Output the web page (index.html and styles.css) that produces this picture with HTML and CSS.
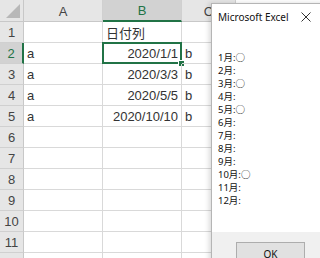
FILE: index.html
```html
<!DOCTYPE html>
<html lang="ja">
<head>
<meta charset="utf-8">
<link rel="stylesheet" href="styles.css">
</head>
<body>
<div class="sheet">
  <div class="corner"><span class="tri"></span></div>
  <div class="colhead">A</div>
  <div class="colhead sel">B</div>
  <div class="colhead">C</div>

  <div class="rowhead">1</div><div class="cell"></div><div class="cell">日付列</div><div class="cell"></div>
  <div class="rowhead sel">2</div><div class="cell">a</div><div class="cell num active">2020/1/1<span class="handle"></span></div><div class="cell">b</div>
  <div class="rowhead">3</div><div class="cell">a</div><div class="cell num">2020/3/3</div><div class="cell">b</div>
  <div class="rowhead">4</div><div class="cell">a</div><div class="cell num">2020/5/5</div><div class="cell">b</div>
  <div class="rowhead">5</div><div class="cell">a</div><div class="cell num">2020/10/10</div><div class="cell">b</div>
  <div class="rowhead">6</div><div class="cell"></div><div class="cell"></div><div class="cell"></div>
  <div class="rowhead">7</div><div class="cell"></div><div class="cell"></div><div class="cell"></div>
  <div class="rowhead">8</div><div class="cell"></div><div class="cell"></div><div class="cell"></div>
  <div class="rowhead">9</div><div class="cell"></div><div class="cell"></div><div class="cell"></div>
  <div class="rowhead">10</div><div class="cell"></div><div class="cell"></div><div class="cell"></div>
  <div class="rowhead">11</div><div class="cell"></div><div class="cell"></div><div class="cell"></div>
  <div class="rowhead">12</div><div class="cell"></div><div class="cell"></div><div class="cell"></div>
</div>

<div class="dialog">
  <div class="titlebar">
    <span class="title">Microsoft Excel</span>
    <svg class="close" width="10" height="10" viewBox="0 0 10 10"><path d="M0.5 0.5 L9.5 9.5 M9.5 0.5 L0.5 9.5" stroke="#333" stroke-width="1" fill="none"/></svg>
  </div>
  <div class="body">
    <div>1月:○</div>
    <div>2月:</div>
    <div>3月:○</div>
    <div>4月:</div>
    <div>5月:○</div>
    <div>6月:</div>
    <div>7月:</div>
    <div>8月:</div>
    <div>9月:</div>
    <div>10月:○</div>
    <div>11月:</div>
    <div>12月:</div>
  </div>
  <div class="footer">
    <div class="okbtn">OK</div>
  </div>
</div>
</body>
</html>
```

FILE: styles.css
```css
html, body {
  margin: 0;
  padding: 0;
  background: #ffffff;
  overflow: hidden;
  width: 320px;
  height: 258px;
}

.sheet {
  display: grid;
  grid-template-columns: 24px 79px 79px 54px;
  grid-template-rows: 22px repeat(12, 21px);
  font-family: "Liberation Sans", "Noto Sans CJK JP", sans-serif;
  font-size: 13px;
  color: #333;
}

.corner {
  background: #e6e6e6;
  border-right: 1px solid #c8c8c8;
  border-bottom: 1px solid #c8c8c8;
  box-sizing: border-box;
  position: relative;
}
.tri {
  position: absolute;
  right: 3px;
  bottom: 3px;
  width: 0;
  height: 0;
  border-left: 14px solid transparent;
  border-bottom: 14px solid #b8b8b8;
}

.colhead {
  background: #e6e6e6;
  border-right: 1px solid #d0d0d0;
  border-bottom: 1px solid #c8c8c8;
  box-sizing: border-box;
  display: flex;
  align-items: center;
  justify-content: center;
  font-size: 13px;
  color: #444;
  padding-top: 1px;
}
.colhead.sel {
  background: #d2d2d2;
  color: #217346;
  border-bottom: 2px solid #217346;
}

.rowhead {
  background: #e6e6e6;
  border-right: 1px solid #c8c8c8;
  border-bottom: 1px solid #d0d0d0;
  box-sizing: border-box;
  display: flex;
  align-items: center;
  justify-content: center;
  font-size: 13px;
  color: #444;
}
.rowhead.sel {
  background: #d2d2d2;
  color: #217346;
  border-right: 2px solid #217346;
}

.cell {
  border-right: 1px solid #d9d9d9;
  border-bottom: 1px solid #d9d9d9;
  box-sizing: border-box;
  display: flex;
  align-items: center;
  padding: 0 3px;
  white-space: nowrap;
  position: relative;
}
.cell.num {
  justify-content: flex-end;
}
.cell.active {
  border: 2px solid #217346;
  margin: -1px 0 0 -1px;
  padding-right: 2px;
}
.handle {
  position: absolute;
  right: -4px;
  bottom: -4px;
  width: 5px;
  height: 5px;
  background: #217346;
  border: 1px solid #fff;
  border-right: none;
  border-bottom: none;
}

.dialog {
  position: absolute;
  left: 211px;
  top: 3px;
  width: 120px;
  height: 262px;
  background: #fff;
  border: 1px solid #b5b5b5;
  box-shadow: -2px 0 5px rgba(0,0,0,0.15);
  font-family: "Noto Sans", "Noto Sans CJK JP", sans-serif;
  font-size: 9.5px;
  color: #111;
  display: flex;
  flex-direction: column;
}
.titlebar {
  height: 25px;
  display: flex;
  align-items: center;
  padding-left: 6px;
}
.title {
  font-size: 10px;
  color: #111;
}
.close {
  margin-left: 12px;
}
.body {
  padding: 22px 0 0 6px;
  line-height: 13px;
  flex: 1;
}
.footer {
  background: #f0f0f0;
  height: 34px;
  padding: 10px 0 0 24px;
  box-sizing: border-box;
}
.okbtn {
  width: 67px;
  height: 22px;
  background: #e1e1e1;
  border: 1px solid #adadad;
  text-align: center;
  line-height: 22px;
  font-size: 10px;
}
```
